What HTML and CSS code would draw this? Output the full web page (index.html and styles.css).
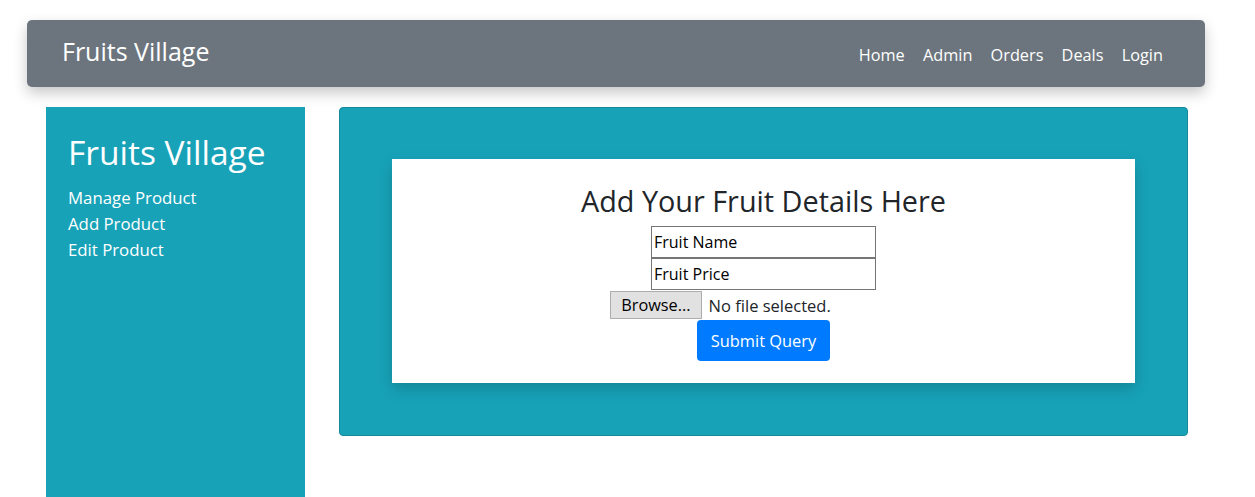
FILE: index.html
```html
<!DOCTYPE html>
<html>
<head>
<meta charset="utf-8">
<link rel="stylesheet" href="styles.css">
</head>
<body>
<nav class="navbar">
  <span class="brand">Fruits Village</span>
  <ul class="nav">
    <li><a href="#">Home</a></li>
    <li><a href="#">Admin</a></li>
    <li><a href="#">Orders</a></li>
    <li><a href="#">Deals</a></li>
    <li><a href="#">Login</a></li>
  </ul>
</nav>
<div class="layout">
  <aside class="sidebar">
    <h2 class="side-title">Fruits Village</h2>
    <a href="#">Manage Product</a>
    <a href="#">Add Product</a>
    <a href="#">Edit Product</a>
  </aside>
  <main class="panel">
    <form class="card">
      <h3 class="card-title">Add Your Fruit Details Here</h3>
      <input class="field" type="text" value="Fruit Name">
      <input class="field" type="text" value="Fruit Price">
      <div class="file-row">
        <span class="browse">Browse...</span>
        <span class="file-label">No file selected.</span>
      </div>
      <button class="submit" type="button">Submit Query</button>
    </form>
  </main>
</div>
</body>
</html>
```
FILE: styles.css
```css
* { box-sizing: border-box; }
body {
  margin: 0;
  font-family: "Open Sans", "Noto Sans", sans-serif;
  color: #212529;
  background: #fff;
  overflow: hidden;
}
.navbar {
  margin: 20px 0 0 27px;
  width: 1178px;
  height: 67px;
  background: #6c757d;
  border-radius: 5px;
  box-shadow: 0 6px 14px rgba(0,0,0,0.22);
  display: flex;
  align-items: center;
  justify-content: space-between;
  padding: 0 33px 0 35px;
}
.brand {
  color: #fff;
  font-size: 25px;
  margin-top: -5px;
}
.nav {
  list-style: none;
  margin: 3px 0 0;
  padding: 0;
  display: flex;
}
.nav a {
  color: #fff;
  text-decoration: none;
  font-size: 16.3px;
  padding: 0 9.1px;
  display: block;
}
.layout {
  display: flex;
  align-items: flex-start;
  margin-top: 20px;
}
.sidebar {
  margin-left: 46px;
  width: 259px;
  height: 400px;
  background: #17a2b8;
  padding: 25px 22px;
  display: flex;
  flex-direction: column;
}
.side-title {
  margin: 0 0 13px;
  color: #fff;
  font-weight: 400;
  font-size: 33.5px;
  line-height: 1.2;
}
.sidebar a {
  color: #fff;
  text-decoration: none;
  font-size: 16.8px;
  line-height: 26px;
}
.panel {
  margin-left: 34px;
  width: 849px;
  height: 329px;
  background: #17a2b8;
  border: 1px solid #148a9c;
  border-radius: 4px;
  padding: 51px 52px;
}
.card {
  background: #fff;
  height: 224px;
  box-shadow: 0 6px 14px rgba(0,0,0,0.18);
  display: flex;
  flex-direction: column;
  align-items: center;
  padding-top: 22px;
}
.card-title {
  margin: 0 0 5px;
  font-weight: 400;
  font-size: 28.8px;
  line-height: 40px;
  color: #212529;
}
.field {
  width: 225px;
  height: 32px;
  border: 1px solid #767676;
  font-family: inherit;
  font-size: 16px;
  color: #000;
  padding: 0 2px;
  margin: 0;
}
.file-row {
  display: flex;
  align-items: center;
  gap: 7px;
  margin-top: 1px;
  margin-right: 86px;
}
.browse {
  display: inline-block;
  height: 28px;
  line-height: 26px;
  padding: 0 10px;
  background: #e1e1e1;
  border: 1px solid #adadad;
  color: #000;
  font-size: 16.3px;
}
.file-label {
  font-size: 16.5px;
  color: #212529;
}
.submit {
  margin-top: 1px;
  height: 41px;
  padding: 0 14px;
  background: #007bff;
  color: #fff;
  border: none;
  border-radius: 4px;
  font-family: inherit;
  font-size: 16.4px;
}
```
